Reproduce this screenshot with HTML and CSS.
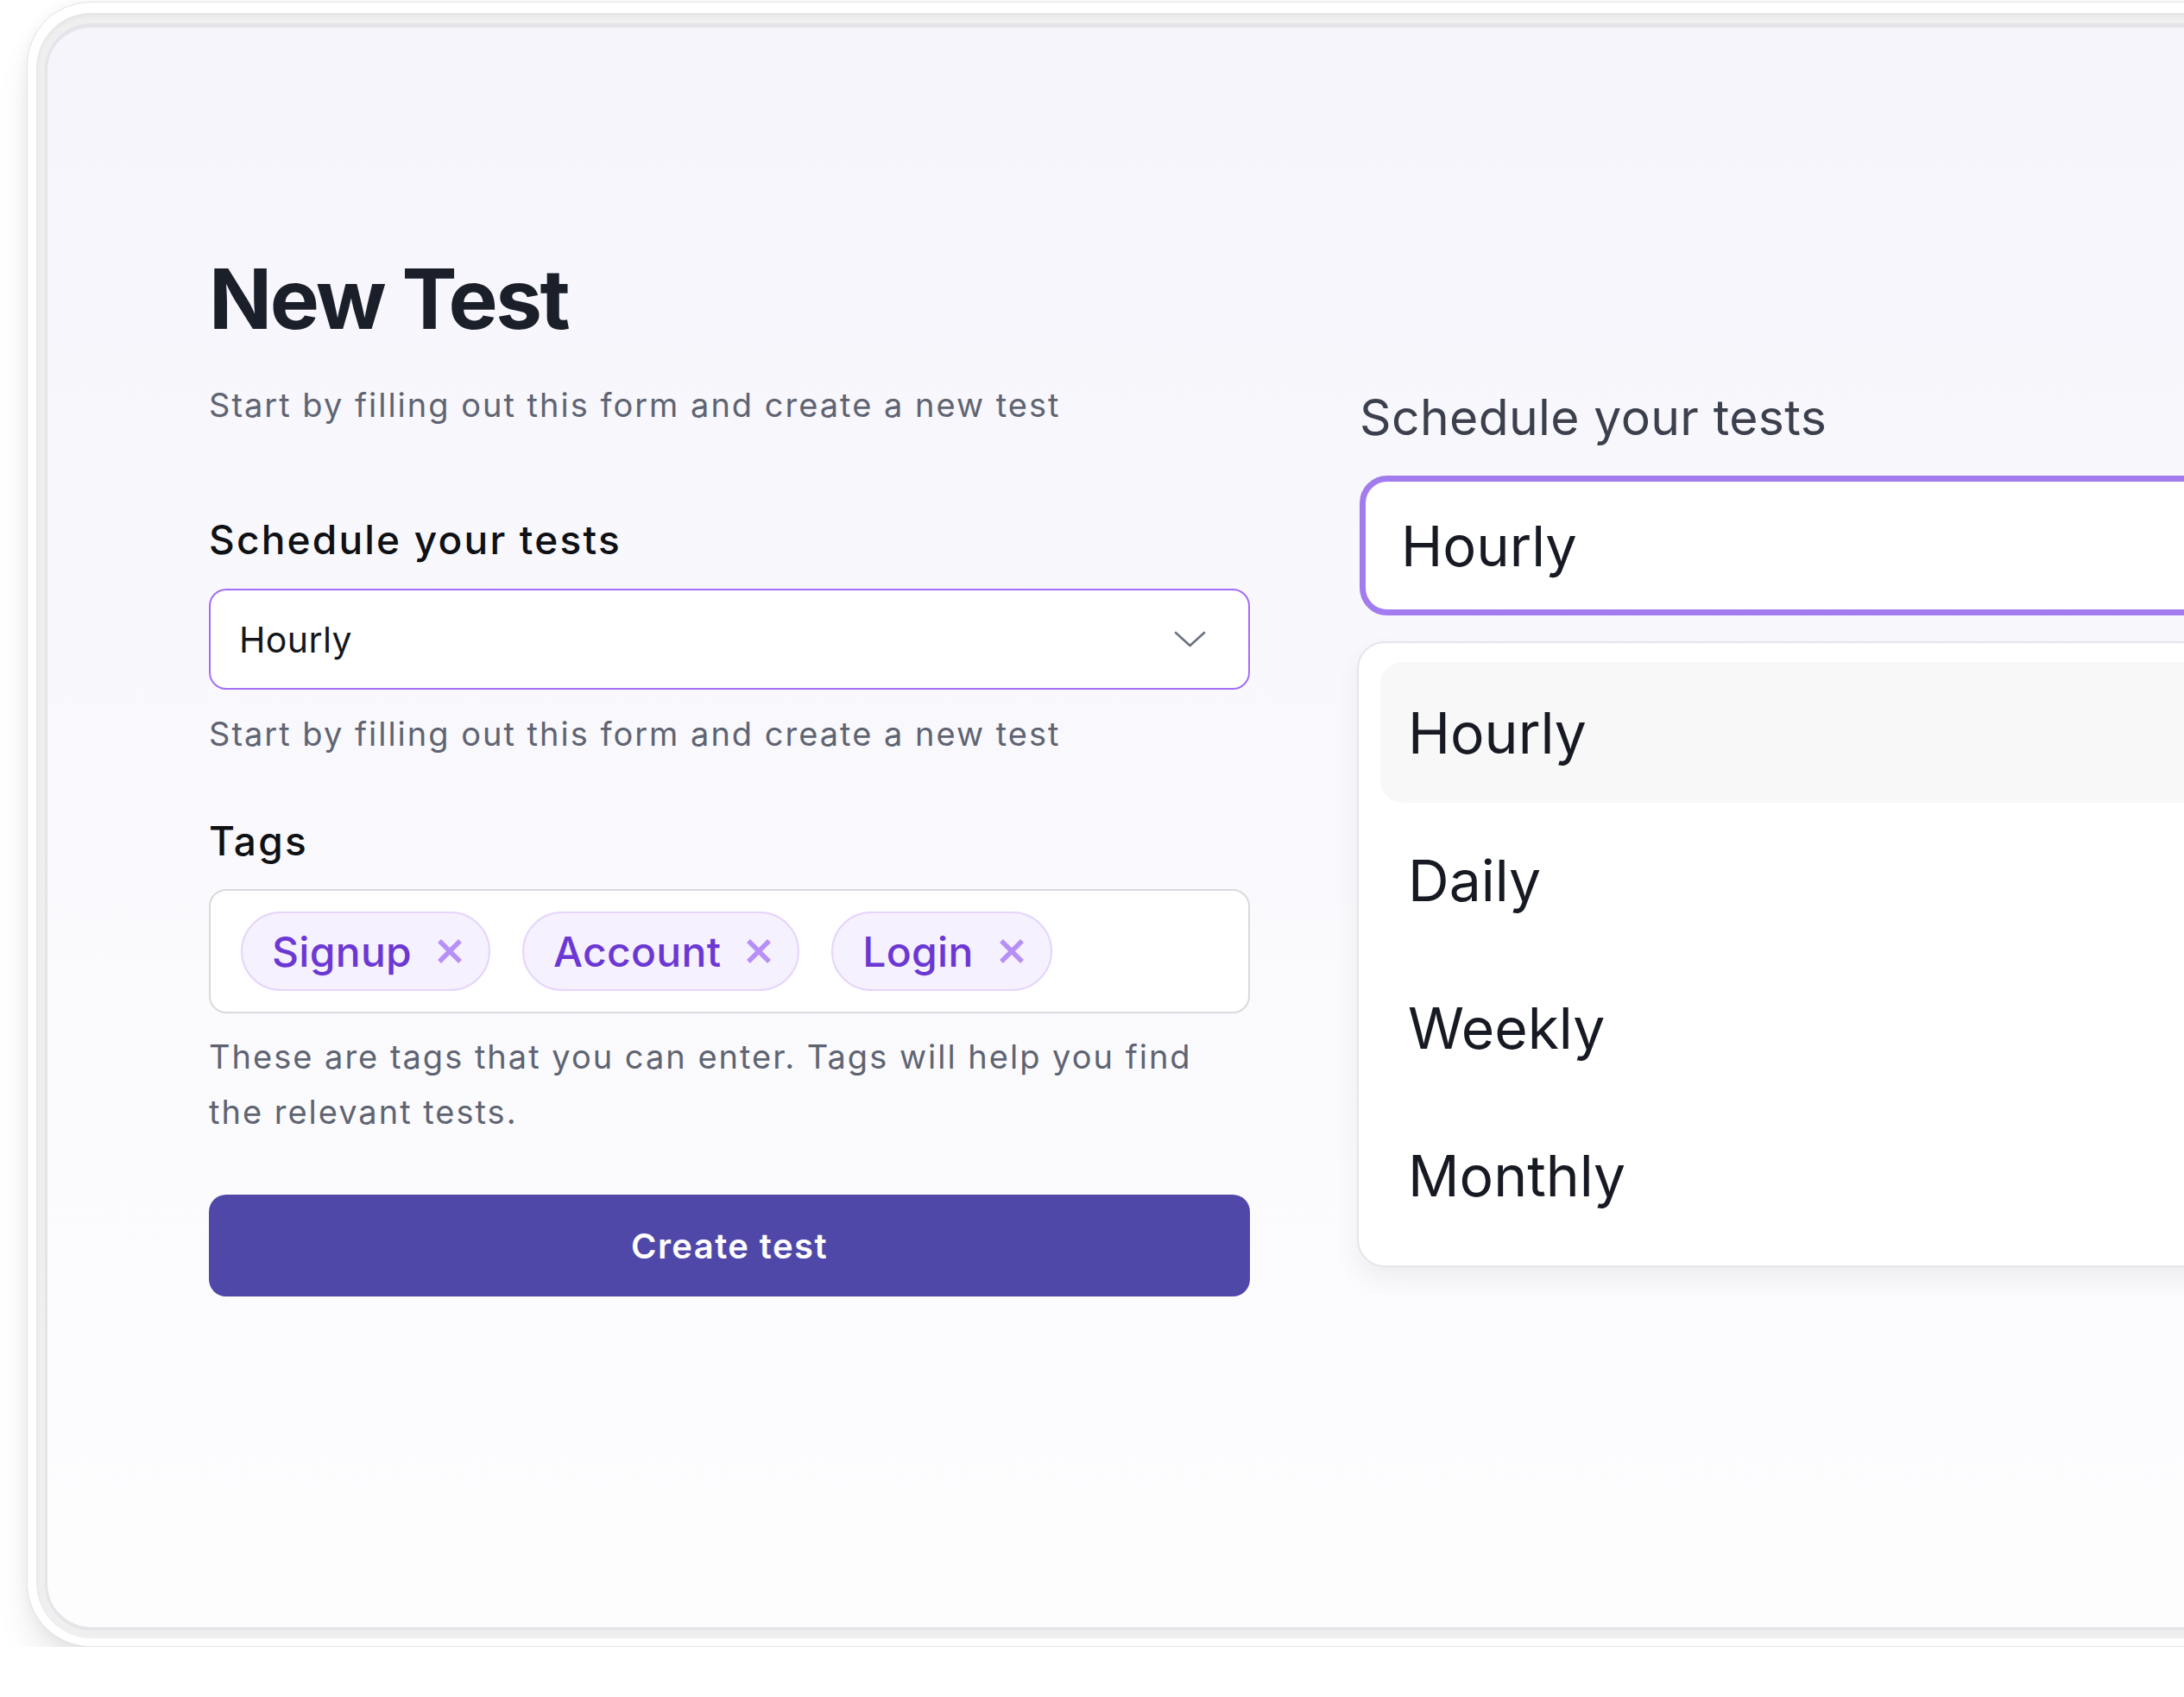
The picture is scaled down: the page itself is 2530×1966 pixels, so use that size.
FILE: index.html
```html
<!DOCTYPE html>
<html lang="en">
<head>
  <meta charset="UTF-8">
  <meta name="viewport" content="width=device-width, initial-scale=1.0">
  <title>New Test</title>
  <link rel="stylesheet" href="styles.css">
</head>
<body>
  <div class="device">
    <div class="bezel">
      <div class="screen">
        <div class="form">
          <h1>New Test</h1>
          <p class="intro">Start by filling out this form and create a new test</p>

          <label class="label">Schedule your tests</label>
          <div class="select">
            <span>Hourly</span>
            <svg class="chevron" width="37" height="19" viewBox="0 0 37 19">
              <path d="M2 2 L18.5 17 L35 2" fill="none" stroke="#6b7280" stroke-width="2.6" stroke-linecap="round" stroke-linejoin="round"/>
            </svg>
          </div>
          <p class="hint">Start by filling out this form and create a new test</p>

          <label class="label tags-label">Tags</label>
          <div class="tags">
            <span class="chip">Signup
              <svg width="30" height="30" viewBox="0 0 30 30"><path d="M3 3 L27 27 M27 3 L3 27" stroke="#b690f6" stroke-width="5.5"/></svg>
            </span>
            <span class="chip">Account
              <svg width="30" height="30" viewBox="0 0 30 30"><path d="M3 3 L27 27 M27 3 L3 27" stroke="#b690f6" stroke-width="5.5"/></svg>
            </span>
            <span class="chip">Login
              <svg width="30" height="30" viewBox="0 0 30 30"><path d="M3 3 L27 27 M27 3 L3 27" stroke="#b690f6" stroke-width="5.5"/></svg>
            </span>
          </div>
          <p class="hint hint-tags">These are tags that you can enter. Tags will help you find the relevant tests.</p>

          <button class="create">Create test</button>
        </div>

        <div class="zoomed">
          <div class="zoomed-label">Schedule your tests</div>
          <div class="focused">Hourly</div>
          <ul class="menu">
            <li class="active">Hourly</li>
            <li>Daily</li>
            <li>Weekly</li>
            <li>Monthly</li>
          </ul>
        </div>
      </div>
    </div>
  </div>
</body>
</html>
```

FILE: styles.css
```css
body {
  margin: 0;
  overflow: hidden;
  background: #fff;
  font-family: Inter, "Noto Sans", sans-serif;
  color: #111827;
}
.device {
  box-sizing: border-box;
  width: 2700px;
  height: 1906px;
  margin: 2px 0 0 31px;
  padding: 12px 10px 9px 10px;
  background: #fff;
  border: 1px solid #e3e3e5;
  border-radius: 74px;
  box-shadow: 0 30px 45px -8px rgba(0,0,0,0.11), 0 0 18px rgba(0,0,0,0.05);
}
.bezel {
  box-sizing: border-box;
  height: 100%;
  padding: 12px 10px 9px 10px;
  background: #efeff0;
  border-radius: 64px;
  box-shadow: inset 0 3px 5px rgba(0,0,0,0.05);
}
.screen {
  box-sizing: border-box;
  height: 100%;
  display: flex;
  gap: 127px;
  padding: 266px 0 0 187px;
  border: solid #e4e5e9;
  border-width: 5px 3px 4px 3px;
  border-radius: 54px;
  background: linear-gradient(to bottom, #f6f5fc, #fdfdfe);
}

/* left: the form */
.form {
  width: 1206px;
  flex-shrink: 0;
  display: flex;
  flex-direction: column;
}
h1 {
  margin: 0;
  font-size: 96px;
  line-height: 96px;
  font-weight: 700;
  color: #1b1f2a;
  letter-spacing: -2.5px;
}
.intro, .hint {
  margin: 47px 0 0;
  font-size: 38px;
  line-height: 57px;
  letter-spacing: 2px;
  color: #5f6472;
}
.label {
  margin-top: 93px;
  font-size: 46px;
  line-height: 69px;
  font-weight: 500;
  letter-spacing: 2.2px;
  color: #0f1115;
}
.select {
  box-sizing: border-box;
  height: 117px;
  margin-top: 22px;
  display: flex;
  align-items: center;
  justify-content: space-between;
  padding: 0 49px 0 33px;
  background: #fff;
  border: 2px solid #a46ef6;
  border-radius: 20px;
  font-size: 41px;
  letter-spacing: 0.4px;
  color: #15171c;
}
.hint {
  margin-top: 23px;
}
.tags-label {
  margin-top: 61px;
}
.tags {
  box-sizing: border-box;
  height: 144px;
  margin-top: 21px;
  display: flex;
  align-items: center;
  gap: 37px;
  padding: 0 35px;
  background: #fff;
  border: 2px solid #dadade;
  border-radius: 20px;
}
.chip {
  box-sizing: border-box;
  height: 92px;
  display: inline-flex;
  align-items: center;
  gap: 29px;
  padding: 0 30px 0 34px;
  background: #f6f1fe;
  border: 2px solid #e6d5fc;
  border-radius: 46px;
  font-size: 48px;
  font-weight: 500;
  letter-spacing: 0.3px;
  color: #6b38d4;
}
.hint-tags {
  max-width: 1190px;
  margin-top: 18px;
  line-height: 64px;
}
.create {
  height: 118px;
  margin-top: 64px;
  border: none;
  border-radius: 20px;
  background: #5048a9;
  color: #fff;
  font-family: Inter, "Noto Sans", sans-serif;
  font-size: 40px;
  font-weight: 600;
  letter-spacing: 1.4px;
}

/* right: zoomed-in dropdown */
.zoomed {
  width: 1100px;
  flex-shrink: 0;
  padding-top: 142px;
}
.zoomed-label {
  font-size: 57px;
  line-height: 87px;
  letter-spacing: 0.4px;
  color: #3b404c;
}
.focused {
  box-sizing: border-box;
  height: 162px;
  margin-top: 24px;
  display: flex;
  align-items: center;
  padding-left: 41px;
  background: #fff;
  border: 7px solid #a27cef;
  border-radius: 32px;
  font-size: 65px;
  color: #171a23;
}
.menu {
  list-style: none;
  margin: 30px 0 0 -3px;
  padding: 22px 25px 23px;
  background: #fff;
  border: 2px solid #e6e6ea;
  border-radius: 32px;
  box-shadow: 0 14px 30px rgba(0,0,0,0.06);
  display: flex;
  flex-direction: column;
  gap: 8px;
}
.menu li {
  height: 163px;
  display: flex;
  align-items: center;
  padding-left: 32px;
  border-radius: 26px;
  font-size: 66px;
  color: #171a23;
}
.menu li.active {
  background: #f8f8f9;
}
```
